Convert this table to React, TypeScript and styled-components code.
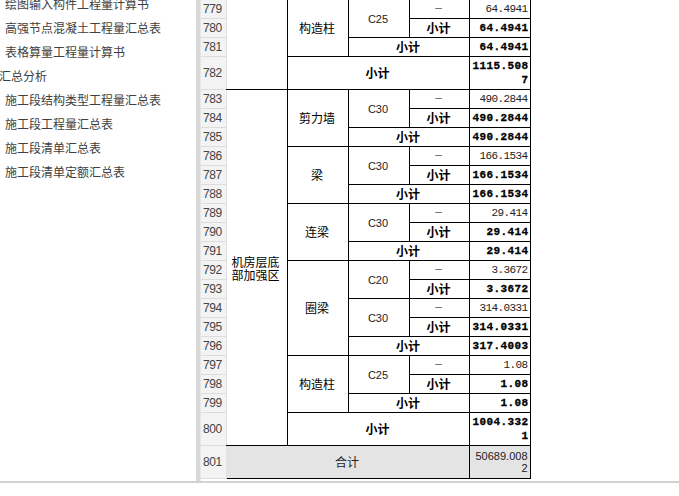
import React from 'react';
import styled, { createGlobalStyle } from 'styled-components';

const GlobalStyle = createGlobalStyle`
  html, body { margin: 0; padding: 0; background: #fff; }
  body {
    width: 679px; height: 496px; overflow: hidden;
    font-family: "Noto Sans CJK SC", "Liberation Sans", sans-serif;
  }
`;

const Screen = styled.div`
  width: 679px;
  height: 496px;
  display: flex;
  flex-direction: column;
  background: #fff;
  overflow: hidden;
`;

const Workspace = styled.div`
  display: flex;
  height: 481px;
  flex: none;
  border-bottom: 2px solid #d2d2d2;
  overflow: hidden;
`;

const Sidebar = styled.nav`
  width: 196px;
  flex: none;
  overflow: hidden;
  background: #fff;
`;

const TreeList = styled.ul`
  list-style: none;
  margin: -8px 0 0 0;
  padding: 0;
`;

const TreeItem = styled.li<{ $group?: boolean }>`
  height: 24px;
  line-height: 24px;
  white-space: nowrap;
  font-size: 12px;
  color: #404040;
  padding-left: ${(p) => (p.$group ? 0 : 5)}px;
  text-indent: ${(p) => (p.$group ? -1 : 0)}px;
`;

const Splitter = styled.div`
  width: 4px;
  flex: none;
  background: #d8d8d8;
  border-right: 1px solid #e6e6e6;
`;

const GridPane = styled.section`
  flex: 1;
  overflow: hidden;
  background: #fff;
`;

const Sheet = styled.table`
  border-collapse: collapse;
  table-layout: fixed;
  margin-top: -1px;
  width: 329px;
`;

const Col = styled.col<{ $w: number }>`
  width: ${(p) => p.$w}px;
`;

const RowHead = styled.th`
  background: #f3f3f3;
  border-top: 1px solid #dcdcdc;
  border-bottom: 1px solid #dcdcdc;
  border-right: 1px solid #e2e2e2;
  border-left: none;
  padding: 0 0 0 2px;
  text-align: left;
  font-family: "Liberation Sans", sans-serif;
  font-weight: normal;
  font-size: 12px;
  letter-spacing: -0.4px;
  color: #444;
  overflow: hidden;
`;

const Row = styled.tr<{ $tall?: boolean }>`
  height: ${(p) => (p.$tall ? 33 : 19)}px;
`;

type Kind =
  | 'zone'
  | 'label'
  | 'grade'
  | 'dash'
  | 'sub'
  | 'num'
  | 'numBold'
  | 'total'
  | 'totalNum';

const Cell = styled.td<{ $kind: Kind }>`
  border: 1px solid #000;
  padding: 0 2px 0 1px;
  vertical-align: middle;
  color: #000;
  line-height: 14px;
  overflow: hidden;
  word-break: break-all;
  font-size: 12px;
  text-align: center;
  ${(p) =>
    p.$kind === 'zone' &&
    `
    border-left: none;
    text-align: left;
    padding-left: 5px;
    line-height: 13px;
  `}
  ${(p) =>
    p.$kind === 'grade' &&
    `
    font-family: "Liberation Sans", sans-serif;
    font-size: 11px;
    color: #222;
  `}
  ${(p) =>
    p.$kind === 'dash' &&
    `
    color: #555;
    font-family: "Liberation Mono", monospace;
    font-size: 11px;
    line-height: 12px;
    padding-bottom: 3px;
  `}
  ${(p) =>
    p.$kind === 'sub' &&
    `
    font-weight: 700;
  `}
  ${(p) =>
    p.$kind === 'num' &&
    `
    text-align: right;
    font-family: "Liberation Mono", monospace;
    font-size: 11px;
    letter-spacing: -0.6px;
    color: #222;
  `}
  ${(p) =>
    p.$kind === 'numBold' &&
    `
    text-align: right;
    font-family: "Liberation Mono", monospace;
    font-weight: 700;
    font-size: 11px;
    letter-spacing: 0.4px;
    padding-right: 1px;
    -webkit-text-stroke: 0.3px #000;
  `}
  ${(p) =>
    p.$kind === 'total' &&
    `
    border-left: none;
    background: #e4e4e4;
    color: #222;
  `}
  ${(p) =>
    p.$kind === 'totalNum' &&
    `
    background: #e4e4e4;
    text-align: right;
    font-family: "Liberation Sans", sans-serif;
    font-size: 11px;
    line-height: 12px;
    color: #222;
  `}
`;

type CellData = { k: Kind; t: string; rs?: number; cs?: number };
type RowData = { n: number; tall?: boolean; cells: CellData[] };

const dash: CellData = { k: 'dash', t: '—' };
const sub = (cs?: number): CellData => ({ k: 'sub', t: '小计', cs });
const num = (t: string): CellData => ({ k: 'num', t });
const bold = (t: string): CellData => ({ k: 'numBold', t });
const label = (t: string, rs: number): CellData => ({ k: 'label', t, rs });
const grade = (t: string): CellData => ({ k: 'grade', t, rs: 2 });

const rows: RowData[] = [
  { n: 779, cells: [{ k: 'zone', t: '', rs: 4 }, label('构造柱', 3), grade('C25'), dash, num('64.4941')] },
  { n: 780, cells: [sub(), bold('64.4941')] },
  { n: 781, cells: [sub(2), bold('64.4941')] },
  { n: 782, tall: true, cells: [sub(3), bold('1115.5087')] },
  { n: 783, cells: [{ k: 'zone', t: '机房层底部加强区', rs: 18 }, label('剪力墙', 3), grade('C30'), dash, num('490.2844')] },
  { n: 784, cells: [sub(), bold('490.2844')] },
  { n: 785, cells: [sub(2), bold('490.2844')] },
  { n: 786, cells: [label('梁', 3), grade('C30'), dash, num('166.1534')] },
  { n: 787, cells: [sub(), bold('166.1534')] },
  { n: 788, cells: [sub(2), bold('166.1534')] },
  { n: 789, cells: [label('连梁', 3), grade('C30'), dash, num('29.414')] },
  { n: 790, cells: [sub(), bold('29.414')] },
  { n: 791, cells: [sub(2), bold('29.414')] },
  { n: 792, cells: [label('圈梁', 5), grade('C20'), dash, num('3.3672')] },
  { n: 793, cells: [sub(), bold('3.3672')] },
  { n: 794, cells: [grade('C30'), dash, num('314.0331')] },
  { n: 795, cells: [sub(), bold('314.0331')] },
  { n: 796, cells: [sub(2), bold('317.4003')] },
  { n: 797, cells: [label('构造柱', 3), grade('C25'), dash, num('1.08')] },
  { n: 798, cells: [sub(), bold('1.08')] },
  { n: 799, cells: [sub(2), bold('1.08')] },
  { n: 800, tall: true, cells: [sub(3), bold('1004.3321')] },
  { n: 801, tall: true, cells: [{ k: 'total', t: '合计', cs: 4 }, { k: 'totalNum', t: '50689.0082' }] },
];

const treeItems: { t: string; group?: boolean }[] = [
  { t: '绘图输入构件工程量计算书' },
  { t: '高强节点混凝土工程量汇总表' },
  { t: '表格算量工程量计算书' },
  { t: '汇总分析', group: true },
  { t: '施工段结构类型工程量汇总表' },
  { t: '施工段工程量汇总表' },
  { t: '施工段清单汇总表' },
  { t: '施工段清单定额汇总表' },
];

const colWidths = [25, 61, 61, 61, 60, 61];

export default function App() {
  return (
    <Screen>
      <GlobalStyle />
      <Workspace>
        <Sidebar>
          <TreeList>
            {treeItems.map((it) => (
              <TreeItem key={it.t} $group={it.group}>
                {it.t}
              </TreeItem>
            ))}
          </TreeList>
        </Sidebar>
        <Splitter />
        <GridPane>
          <Sheet>
            <colgroup>
              {colWidths.map((w, i) => (
                <Col key={i} $w={w} />
              ))}
            </colgroup>
            <tbody>
              {rows.map((r) => (
                <Row key={r.n} $tall={r.tall}>
                  <RowHead>{r.n}</RowHead>
                  {r.cells.map((c, i) => (
                    <Cell key={i} $kind={c.k} rowSpan={c.rs} colSpan={c.cs}>
                      {c.t}
                    </Cell>
                  ))}
                </Row>
              ))}
            </tbody>
          </Sheet>
        </GridPane>
      </Workspace>
    </Screen>
  );
}
